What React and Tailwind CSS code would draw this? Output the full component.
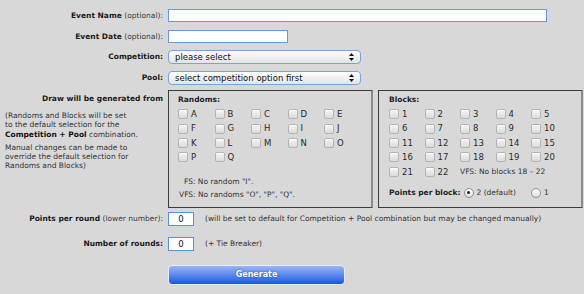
import React from "react";

const RANDOMS = ["A", "B", "C", "D", "E", "F", "G", "H", "I", "J", "K", "L", "M", "N", "O", "P", "Q"];
const BLOCKS = Array.from({ length: 22 }, (_, i) => String(i + 1));

function Check({ label }) {
  return (
    <div className="flex items-center h-[14.4px]">
      <span className="w-[10px] h-[10px] rounded-[2px] border border-[#b4b4b4] bg-gradient-to-b from-[#f6f6f6] to-[#dadada] shadow-[inset_0_1px_0_#fff]" />
      <span className="ml-[3px] text-[8.5px] leading-none text-[#2a2a2a]">{label}</span>
    </div>
  );
}

function Radio({ checked }) {
  return (
    <span className="w-[10px] h-[10px] rounded-full border border-[#8e8e8e] bg-gradient-to-b from-white to-[#dedede] flex items-center justify-center">
      {checked && <span className="w-[3px] h-[3px] rounded-full bg-[#222]" />}
    </span>
  );
}

function Arrows() {
  return (
    <svg width="5" height="8" viewBox="0 0 5 8" className="mr-[6px]">
      <path d="M2.5 0 L5 3 L0 3 Z" fill="#111" />
      <path d="M2.5 8 L5 5 L0 5 Z" fill="#111" />
    </svg>
  );
}

function Label({ bold, light }) {
  return (
    <div className="w-[163px] text-right text-[7.5px] leading-none">
      <span className="font-bold text-[#1a1a1a]">{bold}</span>
      {light && <span className="text-[#3a3a3a]"> {light}</span>}
    </div>
  );
}

export default function App() {
  const selectCls =
    "ml-[5px] w-[193px] h-[14px] rounded-[4px] border border-[#7aa0e6] bg-gradient-to-b from-white to-[#e4e4e4] flex items-center justify-between pl-[6px] text-[8.5px] text-[#111]";
  const numCls =
    "ml-[5px] w-[26px] h-[14px] border border-[#5b8ee6] bg-white flex items-center justify-center text-[8.5px] text-[#111]";

  return (
    <div className="w-[584px] h-[294px] bg-[#d8d8d8] pt-[9px] font-['DejaVu_Sans',sans-serif] text-[#222]">
      <div className="flex items-center h-[13px]">
        <Label bold="Event Name" light="(optional):" />
        <div className="ml-[5px] w-[379px] h-[13px] border border-[#6a96e6] bg-white" />
      </div>

      <div className="flex items-center h-[13px] mt-[8px]">
        <Label bold="Event Date" light="(optional):" />
        <div className="ml-[5px] w-[120px] h-[13px] border border-[#6a96e6] bg-white" />
      </div>

      <div className="flex items-center h-[14px] mt-[7px]">
        <Label bold="Competition:" />
        <div className={selectCls}>
          <span>please select</span>
          <Arrows />
        </div>
      </div>

      <div className="flex items-center h-[14px] mt-[7px]">
        <Label bold="Pool:" />
        <div className={selectCls}>
          <span>select competition option first</span>
          <Arrows />
        </div>
      </div>

      <div className="flex items-start mt-[5px]">
        <div className="w-[163px]">
          <div className="mt-[4px] h-[10px] leading-[10px] text-right text-[7.5px] font-bold text-[#1a1a1a]">
            Draw will be generated from
          </div>
          <div className="pl-[5px] mt-[7px] text-[7.5px] leading-[9.3px] text-[#333]">
            <p>
              (Randoms and Blocks will be set
              <br />
              to the default selection for the
              <br />
              <b className="text-[#111]">Competition + Pool</b> combination.
            </p>
            <p className="mt-[4px]">
              Manual changes can be made to
              <br />
              override the default selection for
              <br />
              Randoms and Blocks)
            </p>
          </div>
        </div>

        <div className="ml-[5px] flex gap-[5px]">
          <div className="w-[205px] h-[118px] border-t border-l border-b border-[#3c3c3c] border-r-2 border-r-[#8c8c8c] pl-[9px] pt-[4px]">
            <div className="h-[10px] leading-[10px] text-[7.5px] font-bold">Randoms:</div>
            <div className="mt-[2px] grid grid-cols-[repeat(5,36.5px)]">
              {RANDOMS.map((r) => (
                <Check key={r} label={r} />
              ))}
            </div>
            <div className="mt-[12.5px] text-[7.5px] leading-[9.5px] text-[#333]">
              <div className="pl-[6px]">FS: No random "I".</div>
              <div className="mt-[3px] pl-[1px]">VFS: No randoms "O", "P", "Q".</div>
            </div>
          </div>

          <div className="w-[205px] h-[118px] border-t border-l border-b border-[#3c3c3c] border-r-2 border-r-[#8c8c8c] pl-[10px] pt-[4px]">
            <div className="h-[10px] leading-[10px] text-[7.5px] font-bold">Blocks:</div>
            <div className="mt-[2px] grid grid-cols-[repeat(5,35.5px)]">
              {BLOCKS.map((b) => (
                <Check key={b} label={b} />
              ))}
              <div className="col-span-3 flex items-center h-[14.4px] text-[7.5px] text-[#333]">
                VFS: No blocks 18 – 22
              </div>
            </div>
            <div className="mt-[9px] flex items-center h-[10px] text-[7.5px]">
              <span className="font-bold">Points per block:</span>
              <span className="ml-[3px]">
                <Radio checked />
              </span>
              <span className="ml-[3px] text-[#333]">2 (default)</span>
              <span className="ml-[15px]">
                <Radio />
              </span>
              <span className="ml-[3px] text-[#333]">1</span>
            </div>
          </div>
        </div>
      </div>

      <div className="flex items-center h-[14px] mt-[4px]">
        <Label bold="Points per round" light="(lower number):" />
        <div className={numCls}>0</div>
        <span className="ml-[11px] text-[7.5px] text-[#333]">
          (will be set to default for Competition + Pool combination but may be changed manually)
        </span>
      </div>

      <div className="flex items-center h-[14px] mt-[11px]">
        <Label bold="Number of rounds:" />
        <div className={numCls}>0</div>
        <span className="ml-[11px] text-[7.5px] text-[#333]">(+ Tie Breaker)</span>
      </div>

      <div className="flex items-center mt-[14px]">
        <div className="w-[163px]" />
        <button className="ml-[5px] w-[177px] h-[20px] rounded-[4px] border border-[#e6ecfb] bg-gradient-to-b from-[#9bb5f8] via-[#5b88ef] to-[#1655e0] text-white text-[8px] font-bold [text-shadow:0_0_2px_rgba(0,0,60,0.5)]">
          Generate
        </button>
      </div>
    </div>
  );
}
